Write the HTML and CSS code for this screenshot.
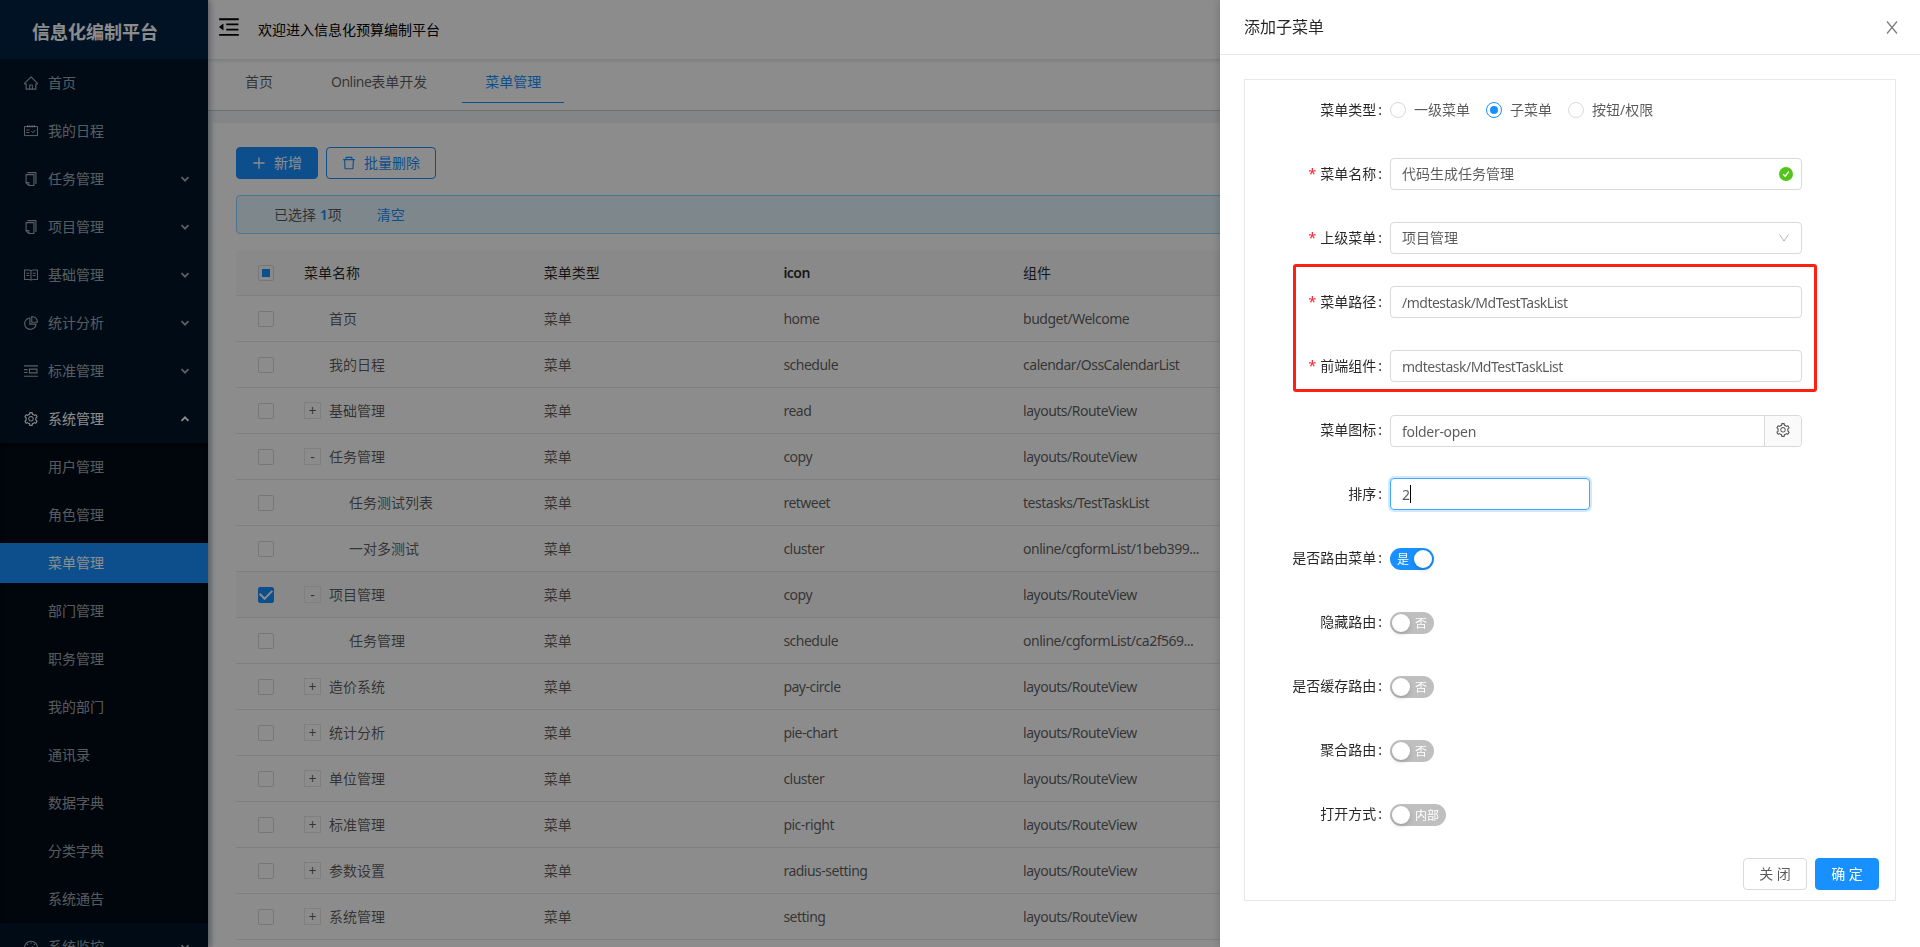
FILE: index.html
```html
<!DOCTYPE html>
<html lang="zh-CN">
<head>
  <meta charset="UTF-8" />
  <meta name="viewport" content="width=device-width, initial-scale=1.0"/>
  <title>信息化编制平台</title>
  <link rel="stylesheet" href="styles.css">
</head>
<body>
    <svg class="sprite" viewBox="0 0 0 0">
        <symbol id="i-home" viewBox="64 64 896 896"><path d="M946.5 505L560.1 118.8l-25.9-25.9a31.5 31.5 0 0 0-44.4 0L77.5 505a63.9 63.9 0 0 0-18.8 46c.4 35.2 29.7 63.3 64.9 63.3h42.5V940h691.8V614.3h43.4c17.1 0 33.2-6.7 45.3-18.8a63.6 63.6 0 0 0 18.7-45.3c0-17-6.7-33.1-18.8-45.2zM568 868H456V664h112v204zm217.9-325.7V868H632V640c0-22.1-17.9-40-40-40H432c-22.1 0-40 17.9-40 40v228H238.1V542.3h-96l370-369.7 23.1 23.1L882 542.3h-96.1z"/></symbol>
        <symbol id="i-schedule" viewBox="64 64 896 896"><path fill="none" stroke="currentColor" stroke-width="64" d="M96 226h832v578H96zM300 134v150M440 134v150M584 134v150M724 134v150M210 448h200M210 608h200M540 530l92 96 160-180"/></symbol>
        <symbol id="i-copy" viewBox="64 64 896 896"><path d="M832 64H296c-4.400 0-8 3.600-8 8v56c0 4.400 3.600 8 8 8h496v688c0 4.400 3.600 8 8 8h56c4.400 0 8-3.600 8-8V96c0-17.700-14.300-32-32-32zM704 192H192c-17.700 0-32 14.300-32 32v530.700c0 8.500 3.400 16.600 9.400 22.600l173.300 173.300c2.200 2.200 4.700 4 7.400 5.500v1.900h4.200c3.500 1.300 7.200 2 11 2H704c17.700 0 32-14.300 32-32V224c0-17.700-14.300-32-32-32zM350 856.200L263.900 770H350v86.200zM664 888H414V746c0-22.100-17.900-40-40-40H232V264h432v624z"/></symbol>
        <symbol id="i-read" viewBox="64 64 896 896"><path fill="none" stroke="currentColor" stroke-width="66" d="M100 194h270q142 0 142 66q0-66 142-66h270v600H654q-142 0-142 66q0-66-142-66H100zM512 260v570M220 400h180M220 550h180M624 400h180M624 550h180"/></symbol>
        <symbol id="i-pie" viewBox="64 64 896 896"><path fill="none" stroke="currentColor" stroke-width="70" d="M440 192a366 366 0 1 0 394 394H440zM560 100v364h364A364 364 0 0 0 560 100z"/></symbol>
        <symbol id="i-pic" viewBox="64 64 896 896"><path fill="none" stroke="currentColor" stroke-width="72" d="M64 180h896M64 844h896M64 420h230M64 604h230M412 392h480v240H412z"/></symbol>
        <symbol id="i-dash" viewBox="64 64 896 896"><path fill="none" stroke="currentColor" stroke-width="72" d="M230 850a410 410 0 1 1 564 0zM512 220v80M270 320l56 56M754 320l-56 56M190 560h80M754 560h80M500 600l120-130"/></symbol>
        <symbol id="i-setting" viewBox="64 64 896 896"><path d="M924.8 625.7l-65.500-56c3.100-19 4.700-38.400 4.700-57.800s-1.600-38.800-4.700-57.800l65.500-56a32.030 32.030 0 0 0 9.300-35.200l-.9-2.600a443.740 443.740 0 0 0-79.700-137.900l-1.800-2.100a32.120 32.120 0 0 0-35.100-9.500l-81.300 28.900c-30-24.600-63.500-44-99.700-57.600l-15.700-85a32.050 32.050 0 0 0-25.800-25.700l-2.700-.5c-52.100-9.400-106.900-9.400-159 0l-2.700.5a32.050 32.050 0 0 0-25.800 25.700l-15.800 85.400a351.860 351.860 0 0 0-99 57.400l-81.900-29.100a32 32 0 0 0-35.100 9.500l-1.800 2.100a446.020 446.020 0 0 0-79.700 137.900l-.9 2.600c-4.500 12.500-.8 26.500 9.300 35.200l66.300 56.600c-3.100 18.800-4.600 38-4.600 57.100 0 19.200 1.500 38.400 4.600 57.100L99 625.500a32.030 32.030 0 0 0-9.300 35.200l.9 2.600c18.100 50.400 44.900 96.900 79.700 137.900l1.800 2.100a32.120 32.120 0 0 0 35.100 9.500l81.900-29.100c29.800 24.500 63.100 43.900 99 57.400l15.800 85.400a32.050 32.050 0 0 0 25.800 25.700l2.700.5a449.400 449.400 0 0 0 159 0l2.700-.5a32.050 32.050 0 0 0 25.800-25.700l15.700-85a350 350 0 0 0 99.700-57.600l81.300 28.900a32 32 0 0 0 35.100-9.500l1.800-2.100c34.800-41.100 61.600-87.500 79.700-137.900l.9-2.600c4.500-12.300.8-26.300-9.300-35zM788.300 465.900c2.500 15.100 3.800 30.600 3.800 46.100s-1.300 31-3.800 46.100l-6.600 40.100 74.700 63.900a370.030 370.030 0 0 1-42.600 73.600L721 702.800l-31.400 25.800c-23.900 19.600-50.500 35-79.300 45.800l-38.100 14.300-17.900 97a377.500 377.500 0 0 1-85 0l-17.900-97.200-37.800-14.500c-28.500-10.800-55-26.200-78.700-45.700l-31.400-25.900-93.400 33.200c-17-22.900-31.200-47.600-42.600-73.600l75.500-64.500-6.500-40c-2.400-14.900-3.700-30.300-3.700-45.500 0-15.300 1.200-30.600 3.700-45.500l6.500-40-75.500-64.500c11.300-26.100 25.600-50.700 42.600-73.600l93.400 33.200 31.400-25.900c23.700-19.500 50.200-34.900 78.700-45.700l37.900-14.300 17.900-97.200c28.100-3.200 56.800-3.200 85 0l17.900 97 38.100 14.300c28.700 10.800 55.400 26.200 79.300 45.800l31.400 25.800 92.800-32.900c17 22.900 31.200 47.600 42.600 73.600L781.800 426l6.500 39.900zM512 326c-97.200 0-176 78.800-176 176s78.800 176 176 176 176-78.800 176-176-78.800-176-176-176zm79.200 255.200A111.600 111.600 0 0 1 512 614c-29.900 0-58-11.700-79.200-32.800A111.600 111.600 0 0 1 400 502c0-29.900 11.700-58 32.800-79.200C454 401.600 482.100 390 512 390c29.900 0 58 11.600 79.200 32.800A111.600 111.600 0 0 1 624 502c0 29.900-11.700 58-32.800 79.200z"/></symbol>
        <symbol id="i-fold" viewBox="64 64 896 896"><path d="M112 160h800v72H112zM400 370h496v72H400zM400 582h496v72H400zM112 792h800v72H112zM115 519L272 642q14 8 14-7V389q0-15-14-7L115 505z"/></symbol>
        <symbol id="i-delete" viewBox="64 64 896 896"><path d="M360 184h304v72h72v-80c0-35.300-28.700-64-64-64H352c-35.300 0-64 28.700-64 64v80h72v-72zm504 72H160c-17.700 0-32 14.300-32 32v32c0 4.400 3.600 8 8 8h60.400l24.700 523c1.600 34.100 29.800 61 63.900 61h454c34.200 0 62.300-26.800 63.900-61l24.700-523H888c4.400 0 8-3.600 8-8v-32c0-17.700-14.300-32-32-32zM731.300 840H292.700l-24.200-512h487l-24.200 512z"/></symbol>
        <symbol id="i-plus" viewBox="64 64 896 896"><path d="M470 152h84v720h-84zM152 470h720v84H152z"/></symbol>
        <symbol id="i-arrow" viewBox="0 0 10 10"><path fill="none" stroke="currentColor" stroke-width="1.8" d="M1.500 3.200L5 6.700l3.500-3.500"/></symbol>
        <symbol id="i-down" viewBox="0 0 12 12"><path fill="none" stroke="currentColor" stroke-width="1" d="M1.500 2.500L6 9l4.500-6.500"/></symbol>
        <symbol id="i-close" viewBox="0 0 16 16"><path fill="none" stroke="currentColor" stroke-width="1.300" d="M3 2.500l10 12M13 2.500l-10 12"/></symbol>
        <symbol id="i-ok" viewBox="0 0 14 14"><circle cx="7" cy="7" r="7"/><path fill="none" stroke="#fff" stroke-width="1.300" d="M4.200 7.200l2 2 3.600-4.500"/></symbol>
    </svg>

    <div class="layout">
        <aside class="sider">
            <div class="logo">信息化编制平台</div>
            <ul class="menu">
                <li class="menu-item"><svg class="icon"><use href="#i-home"/></svg><span>首页</span></li>
                <li class="menu-item"><svg class="icon"><use href="#i-schedule"/></svg><span>我的日程</span></li>
                <li class="menu-item"><svg class="icon"><use href="#i-copy"/></svg><span>任务管理</span><svg class="arrow"><use href="#i-arrow"/></svg></li>
                <li class="menu-item"><svg class="icon"><use href="#i-copy"/></svg><span>项目管理</span><svg class="arrow"><use href="#i-arrow"/></svg></li>
                <li class="menu-item"><svg class="icon"><use href="#i-read"/></svg><span>基础管理</span><svg class="arrow"><use href="#i-arrow"/></svg></li>
                <li class="menu-item"><svg class="icon"><use href="#i-pie"/></svg><span>统计分析</span><svg class="arrow"><use href="#i-arrow"/></svg></li>
                <li class="menu-item"><svg class="icon"><use href="#i-pic"/></svg><span>标准管理</span><svg class="arrow"><use href="#i-arrow"/></svg></li>
                <li class="menu-item open"><svg class="icon"><use href="#i-setting"/></svg><span>系统管理</span><svg class="arrow"><use href="#i-arrow"/></svg></li>
            </ul>
            <ul class="submenu">
                <li class="menu-item"><span>用户管理</span></li>
                <li class="menu-item"><span>角色管理</span></li>
                <li class="menu-item selected"><span>菜单管理</span></li>
                <li class="menu-item"><span>部门管理</span></li>
                <li class="menu-item"><span>职务管理</span></li>
                <li class="menu-item"><span>我的部门</span></li>
                <li class="menu-item"><span>通讯录</span></li>
                <li class="menu-item"><span>数据字典</span></li>
                <li class="menu-item"><span>分类字典</span></li>
                <li class="menu-item"><span>系统通告</span></li>
            </ul>
            <ul class="menu">
                <li class="menu-item"><svg class="icon"><use href="#i-dash"/></svg><span>系统监控</span><svg class="arrow"><use href="#i-arrow"/></svg></li>
            </ul>
        </aside>

        <div class="main">
            <header class="header">
                <svg class="trigger"><use href="#i-fold"/></svg>
                <span>欢迎进入信息化预算编制平台</span>
            </header>
            <nav class="tabs">
                <div class="tab">首页</div>
                <div class="tab"><span class="latin">Online</span>表单开发</div>
                <div class="tab active">菜单管理</div>
            </nav>
            <section class="content">
                <div class="toolbar">
                    <button class="btn primary"><svg class="icon"><use href="#i-plus"/></svg><span>新增</span></button>
                    <button class="btn ghost"><svg class="icon"><use href="#i-delete"/></svg><span>批量删除</span></button>
                </div>
                <div class="alert"><span>已选择 <b>1</b>项</span><a>清空</a></div>
                <div class="table">
                    <div class="row head"><div class="check"><i class="box half"></i></div><div>菜单名称</div><div>菜单类型</div><div class="latin">icon</div><div>组件</div></div>
                    <div class="row"><div class="check"><i class="box"></i></div><div><i class="expand none"></i>首页</div><div>菜单</div><div class="latin">home</div><div class="latin">budget/Welcome</div></div>
                    <div class="row"><div class="check"><i class="box"></i></div><div><i class="expand none"></i>我的日程</div><div>菜单</div><div class="latin">schedule</div><div class="latin">calendar/OssCalendarList</div></div>
                    <div class="row"><div class="check"><i class="box"></i></div><div><i class="expand">+</i>基础管理</div><div>菜单</div><div class="latin">read</div><div class="latin">layouts/RouteView</div></div>
                    <div class="row"><div class="check"><i class="box"></i></div><div><i class="expand">-</i>任务管理</div><div>菜单</div><div class="latin">copy</div><div class="latin">layouts/RouteView</div></div>
                    <div class="row"><div class="check"><i class="box"></i></div><div class="child"><i class="expand none"></i>任务测试列表</div><div>菜单</div><div class="latin">retweet</div><div class="latin">testasks/TestTaskList</div></div>
                    <div class="row"><div class="check"><i class="box"></i></div><div class="child"><i class="expand none"></i>一对多测试</div><div>菜单</div><div class="latin">cluster</div><div class="latin">online/cgformList/1beb399...</div></div>
                    <div class="row picked"><div class="check"><i class="box checked"></i></div><div><i class="expand">-</i>项目管理</div><div>菜单</div><div class="latin">copy</div><div class="latin">layouts/RouteView</div></div>
                    <div class="row"><div class="check"><i class="box"></i></div><div class="child"><i class="expand none"></i>任务管理</div><div>菜单</div><div class="latin">schedule</div><div class="latin">online/cgformList/ca2f569...</div></div>
                    <div class="row"><div class="check"><i class="box"></i></div><div><i class="expand">+</i>造价系统</div><div>菜单</div><div class="latin">pay-circle</div><div class="latin">layouts/RouteView</div></div>
                    <div class="row"><div class="check"><i class="box"></i></div><div><i class="expand">+</i>统计分析</div><div>菜单</div><div class="latin">pie-chart</div><div class="latin">layouts/RouteView</div></div>
                    <div class="row"><div class="check"><i class="box"></i></div><div><i class="expand">+</i>单位管理</div><div>菜单</div><div class="latin">cluster</div><div class="latin">layouts/RouteView</div></div>
                    <div class="row"><div class="check"><i class="box"></i></div><div><i class="expand">+</i>标准管理</div><div>菜单</div><div class="latin">pic-right</div><div class="latin">layouts/RouteView</div></div>
                    <div class="row"><div class="check"><i class="box"></i></div><div><i class="expand">+</i>参数设置</div><div>菜单</div><div class="latin">radius-setting</div><div class="latin">layouts/RouteView</div></div>
                    <div class="row"><div class="check"><i class="box"></i></div><div><i class="expand">+</i>系统管理</div><div>菜单</div><div class="latin">setting</div><div class="latin">layouts/RouteView</div></div>
                </div>
            </section>
        </div>
    </div>

    <div class="mask"></div>

    <div class="drawer">
        <div class="drawer-header">
            <span>添加子菜单</span>
            <svg class="close"><use href="#i-close"/></svg>
        </div>
        <div class="drawer-body">
            <div class="form">
                <div class="form-row">
                    <label>菜单类型</label>
                    <div class="radios">
                        <span class="radio"><i></i><span>一级菜单</span></span>
                        <span class="radio on"><i></i><span>子菜单</span></span>
                        <span class="radio"><i></i><span>按钮/权限</span></span>
                    </div>
                </div>
                <div class="form-row"><label class="required">菜单名称</label><div class="input"><span>代码生成任务管理</span><svg class="ok"><use href="#i-ok"/></svg></div></div>
                <div class="form-row"><label class="required">上级菜单</label><div class="input"><span>项目管理</span><svg class="down"><use href="#i-down"/></svg></div></div>
                <div class="form-row"><label class="required">菜单路径</label><div class="input latin">/mdtestask/MdTestTaskList</div></div>
                <div class="form-row"><label class="required">前端组件</label><div class="input latin">mdtestask/MdTestTaskList</div></div>
                <div class="form-row"><label>菜单图标</label><div class="input with-addon latin">folder-open<span class="addon"><svg class="icon"><use href="#i-setting"/></svg></span></div></div>
                <div class="form-row"><label>排序</label><div class="input number latin">2<i class="caret"></i></div></div>
                <div class="form-row"><label>是否路由菜单</label><div class="switch on">是</div></div>
                <div class="form-row"><label>隐藏路由</label><div class="switch">否</div></div>
                <div class="form-row"><label>是否缓存路由</label><div class="switch">否</div></div>
                <div class="form-row"><label>聚合路由</label><div class="switch">否</div></div>
                <div class="form-row"><label>打开方式</label><div class="switch">内部</div></div>
                <div class="form-footer">
                    <button class="btn"><span>关 闭</span></button>
                    <button class="btn primary"><span>确 定</span></button>
                </div>
                <div class="highlight"></div>
            </div>
        </div>
    </div>
</body>
</html>
```

FILE: styles.css
```css
* {
    margin: 0;
    padding: 0;
    box-sizing: border-box;
}

body {
    height: 100vh;
    overflow: hidden;
    font-family: "Noto Sans", "Noto Sans CJK SC", sans-serif;
    font-size: 14px;
    line-height: 21px;
    color: rgba(0, 0, 0, 0.65);
    background-color: #f0f2f5;
}

ul {
    list-style: none;
}

i {
    font-style: normal;
}

svg {
    fill: currentColor;
    flex: none;
}

.sprite {
    display: none;
}

.icon {
    width: 14px;
    height: 14px;
}

.latin {
    letter-spacing: -0.5px;
}

.layout {
    display: flex;
    height: 100vh;
}

/* Sidebar */
.sider {
    position: relative;
    z-index: 2;
    width: 208px;
    flex: none;
    overflow: hidden;
    background-color: #001529;
    box-shadow: 2px 0 6px rgba(0, 21, 41, 0.35);
    color: rgba(255, 255, 255, 0.65);
}

.logo {
    height: 59px;
    padding: 5px 0 0 32px;
    line-height: 54px;
    font-size: 18px;
    font-weight: 700;
    color: #fff;
    background-color: #002140;
}

.menu,
.submenu {
    display: flow-root;
}

.submenu {
    background-color: #000c17;
    box-shadow: inset 0 2px 8px rgba(0, 0, 0, 0.45);
}

.menu-item {
    display: flex;
    align-items: center;
    height: 40px;
    margin: 4px 0 8px;
    padding: 0 18px 0 24px;
}

.menu-item:last-child {
    margin-bottom: 4px;
}

.menu-item span {
    padding-bottom: 2px;
}

.menu-item .icon {
    margin-right: 10px;
}

.menu-item .arrow {
    width: 10px;
    height: 10px;
    margin-left: auto;
}

.menu-item.open {
    color: #fff;
}

.menu-item.open .arrow {
    transform: rotate(180deg);
}

.submenu .menu-item {
    padding-left: 48px;
}

.menu-item.selected {
    color: #fff;
    background-color: #1890ff;
}

/* Header and tabs */
.main {
    flex: 1;
    min-width: 0;
    display: flex;
    flex-direction: column;
}

.header {
    position: relative;
    display: flex;
    align-items: center;
    gap: 18px;
    height: 59px;
    padding: 0 0 0 10px;
    background-color: #fff;
    box-shadow: 0 1px 4px rgba(0, 21, 41, 0.18);
    color: #000;
}

.trigger {
    width: 22px;
    height: 22px;
    margin-top: -5px;
}

.tabs {
    display: flex;
    gap: 12px;
    height: 52px;
    padding-left: 14px;
    background-color: #fff;
    border-bottom: 1px solid #ccc;
}

.tab {
    height: 44px;
    padding: 0 23px;
    line-height: 46px;
}

.tab.active {
    color: #1890ff;
    border-bottom: 1px solid #1890ff;
}

/* Table card */
.content {
    flex: 1;
    margin: 12px 5px 0;
    padding: 24px 23px;
    overflow: hidden;
    background-color: #fff;
}

.toolbar {
    display: flex;
    gap: 8px;
    margin-bottom: 16px;
}

.btn {
    display: flex;
    align-items: center;
    gap: 8px;
    height: 32px;
    padding: 0 15px;
    border: 1px solid #d9d9d9;
    border-radius: 4px;
    background-color: #fff;
    color: rgba(0, 0, 0, 0.65);
    font-family: inherit;
    font-size: 14px;
    cursor: pointer;
}

.btn span {
    padding-bottom: 2px;
}

.btn.primary {
    color: #fff;
    background-color: #1890ff;
    border-color: #1890ff;
}

.btn.ghost {
    color: #1890ff;
    border-color: #1890ff;
}

.alert {
    display: flex;
    align-items: center;
    height: 39px;
    padding-left: 37px;
    margin-bottom: 16px;
    border: 1px solid #91d5ff;
    border-radius: 4px;
    background-color: #e6f7ff;
}

.alert b {
    font-weight: 600;
    color: #1890ff;
}

.alert a {
    margin-left: 35px;
    color: #1890ff;
}

.row {
    display: grid;
    grid-template-columns: 60px repeat(6, 239.7px);
    align-items: center;
    height: 46px;
    border-bottom: 1px solid #e8e8e8;
}

.row > div {
    display: flex;
    align-items: center;
    padding: 0 8px;
}

.row.head {
    color: rgba(0, 0, 0, 0.85);
    background-color: #fafafa;
}

.row.head .latin {
    font-weight: 600;
}

.row.picked {
    background-color: #fafafa;
}

.row > .check {
    justify-content: center;
}

.row > .child {
    padding-left: 28px;
}

.box {
    display: flex;
    align-items: center;
    justify-content: center;
    width: 16px;
    height: 16px;
    border: 1px solid #d9d9d9;
    border-radius: 2px;
}

.box.half::after {
    content: "";
    width: 8px;
    height: 8px;
    background-color: #1890ff;
}

.box.checked {
    border-color: #1890ff;
    background-color: #1890ff;
}

.box.checked::after {
    content: "";
    width: 6px;
    height: 10px;
    margin-top: -3px;
    border: solid #fff;
    border-width: 0 2px 2px 0;
    transform: rotate(45deg);
}

.expand {
    width: 17px;
    height: 17px;
    margin-right: 8px;
    border: 1px solid #e8e8e8;
    line-height: 15px;
    text-align: center;
}

.expand.none {
    border-color: transparent;
}

/* Drawer */
.mask {
    position: fixed;
    inset: 0;
    z-index: 10;
    background-color: rgba(0, 0, 0, 0.45);
}

.drawer {
    position: fixed;
    top: 0;
    right: 0;
    bottom: 0;
    z-index: 11;
    width: 700px;
    background-color: #fff;
    box-shadow: -2px 0 8px rgba(0, 0, 0, 0.15);
}

.drawer-header {
    display: flex;
    align-items: center;
    justify-content: space-between;
    height: 55px;
    padding: 0 20px 0 24px;
    border-bottom: 1px solid #e8e8e8;
    font-size: 16px;
    color: rgba(0, 0, 0, 0.85);
}

.close {
    width: 16px;
    height: 16px;
    color: rgba(0, 0, 0, 0.5);
}

.drawer-body {
    padding: 24px;
}

.form {
    position: relative;
    height: 822px;
    padding-top: 14px;
    border: 1px solid #e8e8e8;
}

.form-row {
    display: flex;
    align-items: center;
    height: 32px;
    margin-bottom: 32px;
}

.form-row label {
    width: 145px;
    flex: none;
    padding: 0 8px 2px 0;
    text-align: right;
    color: rgba(0, 0, 0, 0.85);
}

.form-row label::after {
    content: ":";
    margin-left: 2px;
}

.form-row label.required::before {
    content: "*";
    margin-right: 4px;
    color: #f5222d;
}

.radios {
    display: flex;
    gap: 16px;
}

.radio {
    display: flex;
    align-items: center;
    gap: 8px;
}

.radio span,
.input > span:first-child {
    padding-bottom: 2px;
}

.radio i {
    display: flex;
    align-items: center;
    justify-content: center;
    width: 16px;
    height: 16px;
    border: 1px solid #d9d9d9;
    border-radius: 50%;
}

.radio.on i {
    border-color: #1890ff;
}

.radio.on i::after {
    content: "";
    width: 8px;
    height: 8px;
    border-radius: 50%;
    background-color: #1890ff;
}

.input {
    display: flex;
    align-items: center;
    width: 412px;
    height: 32px;
    padding: 0 11px;
    border: 1px solid #d9d9d9;
    border-radius: 4px;
}

.input .ok {
    width: 14px;
    height: 14px;
    margin: 0 -3px 0 auto;
    color: #52c41a;
}

.input .down {
    width: 12px;
    height: 12px;
    margin-left: auto;
    color: rgba(0, 0, 0, 0.3);
}

.input.with-addon {
    margin-top: 2px;
    padding-right: 0;
    letter-spacing: -0.3px;
}

.input > .addon {
    display: flex;
    align-items: center;
    justify-content: center;
    width: 37px;
    height: 30px;
    margin-left: auto;
    padding: 0;
    border-left: 1px solid #d9d9d9;
    border-radius: 0 4px 4px 0;
    background-color: #fafafa;
}

.input.number {
    width: 200px;
    border-color: #40a9ff;
    box-shadow: 0 0 0 2px rgba(24, 144, 255, 0.2);
}

.caret {
    width: 1px;
    height: 18px;
    background-color: #000;
}

.switch {
    display: flex;
    align-items: center;
    gap: 5px;
    height: 22px;
    margin-top: 2px;
    padding: 0 7px 0 2px;
    border-radius: 11px;
    background-color: #bfbfbf;
    color: #fff;
    font-size: 12px;
}

.switch::before {
    content: "";
    width: 18px;
    height: 18px;
    border-radius: 50%;
    background-color: #fff;
    box-shadow: 0 2px 4px rgba(0, 35, 11, 0.2);
}

.switch.on {
    flex-direction: row-reverse;
    padding: 0 2px 0 7px;
    background-color: #1890ff;
}

.form-footer {
    display: flex;
    justify-content: flex-end;
    gap: 8px;
    margin-top: -4px;
    padding-right: 16px;
}

.form-footer .btn {
    width: 64px;
    justify-content: center;
}

/* Frame around the path and component fields */
.highlight {
    position: absolute;
    top: 184px;
    left: 48px;
    width: 524px;
    height: 128px;
    border: 3px solid #ff2012;
    border-radius: 3px;
}
```
